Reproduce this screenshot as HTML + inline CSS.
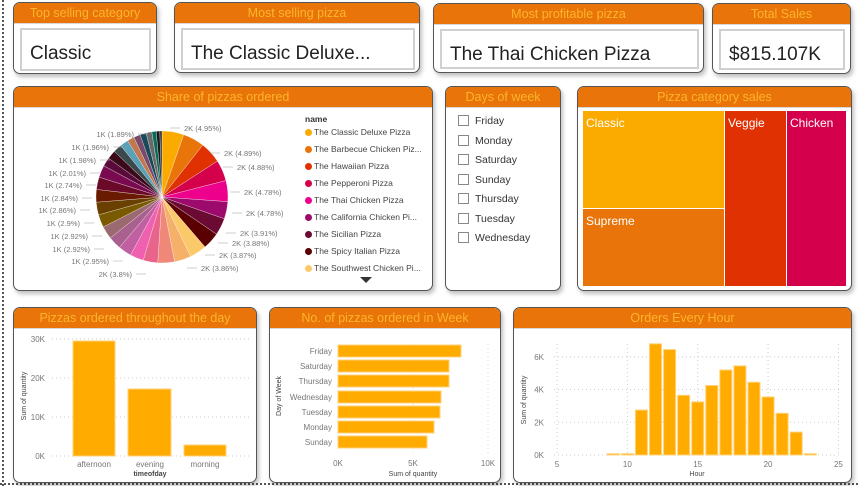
<!DOCTYPE html>
<html><head><meta charset="utf-8"><style>
*{box-sizing:border-box;margin:0;padding:0}
body{width:858px;height:486px;background:#fff;position:relative;overflow:hidden;font-family:"Liberation Sans",sans-serif}
.card{position:absolute;background:#fff;border:1px solid #555;border-radius:7px;overflow:hidden;box-shadow:2px 3px 4px rgba(0,0,0,.25)}
.hd{background:#e8740a;color:#fdb52a;text-align:center;font-size:12.5px;height:21px;line-height:21px;border-bottom:1px solid #d8d8d8}
.box{position:absolute;border:2px solid #d0d0d0;background:#fff;font-size:19px;color:#222;padding-left:8px}
.abs{position:absolute}
.ax{position:absolute;font-size:8px;color:#777}
.lg{position:absolute;font-size:8.5px;color:#444;white-space:nowrap}
.lg i{display:inline-block;width:7px;height:7px;border-radius:50%;margin-right:2px;vertical-align:-0.5px}
.day{position:absolute;left:12px;font-size:10.5px;color:#333}
.day i{display:inline-block;width:11px;height:11px;border:1px solid #888;margin-right:6px;vertical-align:-2px}
</style></head><body>
<div class="abs" style="left:2px;top:0;bottom:0;border-left:2px dotted #555"></div>
<div class="abs" style="left:0;right:0;top:483px;border-top:2px dotted #555"></div>

<div class="card" style="left:13px;top:2px;width:144px;height:72px"><div class="hd">Top selling category</div>
<div class="box" style="left:6px;top:25px;width:131px;height:43px;line-height:48px">Classic</div></div>
<div class="card" style="left:174px;top:2px;width:246px;height:71px"><div class="hd">Most selling pizza</div>
<div class="box" style="left:6px;top:25px;width:234px;height:42px;line-height:47px">The Classic Deluxe...</div></div>
<div class="card" style="left:433px;top:3px;width:271px;height:70px"><div class="hd">Most profitable pizza</div>
<div class="box" style="left:6px;top:25px;width:259px;height:40px;line-height:47px">The Thai Chicken Pizza</div></div>
<div class="card" style="left:712px;top:3px;width:139px;height:71px"><div class="hd">Total Sales</div>
<div class="box" style="left:6px;top:25px;width:126px;height:41px;line-height:48px">$815.107K</div></div>

<div class="card" style="left:13px;top:86px;width:420px;height:205px"><div class="hd">Share of pizzas ordered</div>
<svg id="pie" class="abs" style="left:0;top:0" width="420" height="205"></svg>
<div class="lg" style="left:291px;top:27px;font-weight:bold;color:#333">name</div>
<div id="leg"></div>
<div class="abs" style="left:346px;top:190px;width:0;height:0;border-left:6px solid transparent;border-right:6px solid transparent;border-top:6px solid #333"></div>
</div>

<div class="card" style="left:445px;top:86px;width:116px;height:205px"><div class="hd">Days of week</div>
<div class="day" style="top:28px"><i></i>Friday</div>
<div class="day" style="top:48px"><i></i>Monday</div>
<div class="day" style="top:67px"><i></i>Saturday</div>
<div class="day" style="top:87px"><i></i>Sunday</div>
<div class="day" style="top:106px"><i></i>Thursday</div>
<div class="day" style="top:126px"><i></i>Tuesday</div>
<div class="day" style="top:145px"><i></i>Wednesday</div>
</div>

<div class="card" style="left:577px;top:86px;width:275px;height:205px"><div class="hd">Pizza category sales</div>
<div class="abs" style="left:5px;top:24px;width:141px;height:97px;background:#fbab00;color:#fff;font-size:12px;padding:5px 3px">Classic</div>
<div class="abs" style="left:5px;top:122px;width:141px;height:77px;background:#e8740a;color:#fff;font-size:12px;padding:5px 3px">Supreme</div>
<div class="abs" style="left:147px;top:24px;width:61px;height:175px;background:#e03102;color:#fff;font-size:12px;padding:5px 3px">Veggie</div>
<div class="abs" style="left:209px;top:24px;width:59px;height:175px;background:#d5004c;color:#fff;font-size:12px;padding:5px 3px">Chicken</div>
</div>

<div class="card" style="left:13px;top:307px;width:244px;height:176px"><div class="hd">Pizzas ordered throughout the day</div>
<svg class="abs" style="left:0;top:0" width="244" height="176">
<g stroke="#ccc" stroke-dasharray="1,3"><line x1="38" x2="235" y1="31" y2="31"/><line x1="38" x2="235" y1="70" y2="70"/><line x1="38" x2="235" y1="109" y2="109"/><line x1="38" x2="235" y1="148" y2="148"/></g>
<g fill="#ffab00" stroke="#ffd27a" stroke-width="1"><rect x="59" y="33" width="42" height="115"/><rect x="114" y="81" width="43" height="67"/><rect x="170" y="137" width="42" height="11"/></g>
<g font-size="8" fill="#777" text-anchor="end"><text x="31" y="34">30K</text><text x="31" y="73">20K</text><text x="31" y="112">10K</text><text x="31" y="151">0K</text></g>
<g font-size="8" fill="#777" text-anchor="middle"><text x="80" y="159">afternoon</text><text x="136" y="159">evening</text><text x="191" y="159">morning</text></g>
<text x="136" y="168" font-size="7" fill="#444" font-weight="bold" text-anchor="middle">timeofday</text>
<text transform="translate(12,88) rotate(-90)" font-size="7" fill="#444" text-anchor="middle">Sum of quantity</text>
</svg></div>

<div class="card" style="left:269px;top:307px;width:232px;height:176px"><div class="hd">No. of pizzas ordered in Week</div>
<svg class="abs" style="left:0;top:0" width="232" height="176">
<g stroke="#ddd" stroke-dasharray="1,3"><line x1="143" x2="143" y1="36" y2="148"/><line x1="218" x2="218" y1="36" y2="148"/></g>
<g fill="#ffab00" stroke="#ffd27a"><rect x="68" y="37" width="123" height="12"/><rect x="68" y="52" width="111" height="12"/><rect x="68" y="67" width="111" height="12"/><rect x="68" y="83" width="103" height="12"/><rect x="68" y="98" width="102" height="12"/><rect x="68" y="113" width="96" height="12"/><rect x="68" y="128" width="89" height="12"/></g>
<g font-size="8" fill="#777" text-anchor="end"><text x="62" y="46">Friday</text><text x="62" y="61">Saturday</text><text x="62" y="76">Thursday</text><text x="62" y="92">Wednesday</text><text x="62" y="107">Tuesday</text><text x="62" y="122">Monday</text><text x="62" y="137">Sunday</text></g>
<g font-size="8" fill="#777" text-anchor="middle"><text x="68" y="158">0K</text><text x="143" y="158">5K</text><text x="218" y="158">10K</text></g>
<text x="143" y="168" font-size="7" fill="#444" text-anchor="middle">Sum of quantity</text>
<text transform="translate(11,88) rotate(-90)" font-size="7" fill="#444" text-anchor="middle">Day of Week</text>
</svg></div>

<div class="card" style="left:513px;top:307px;width:339px;height:176px"><div class="hd">Orders Every Hour</div>
<svg id="hr" class="abs" style="left:0;top:0" width="339" height="176"></svg></div>

<script>
// pie
var vals=[4.95,4.89,4.88,4.78,4.78,3.91,3.88,3.87,3.86,3.8,3.8,3.3,3.1,3.0,2.95,2.92,2.92,2.9,2.86,2.84,2.74,2.01,1.98,1.96,1.89,1.6,1.5,1.4,1.3,1.0,0.8,0.5];
var cols=["#fbab00","#e8740a","#e03102","#d5004c","#ec008c","#9c0a6b","#6b0a32","#5a0000","#fcc96a","#f5b06a","#f0887a","#e8648a","#f060b0","#c060a0","#a8608e","#9a6a70","#7a5a00","#6a4000","#6a1a00","#6a0a28","#7a0a50","#5a0a3a","#3a0a1a","#3a4a4a","#5aa0b8","#c07850","#7a4a6a","#1a4a5a","#6a6a6a","#0a6a5a","#1a1a1a","#333"];
var tot=vals.reduce((a,b)=>a+b,0),cx=148,cy=110,r=66,a=0,s="";
for(var i=0;i<vals.length;i++){var a2=a+vals[i]/tot*2*Math.PI;
var x1=cx+r*Math.sin(a),y1=cy-r*Math.cos(a),x2=cx+r*Math.sin(a2),y2=cy-r*Math.cos(a2);
s+='<path d="M'+cx+','+cy+'L'+x1.toFixed(1)+','+y1.toFixed(1)+'A'+r+','+r+' 0 0 1 '+x2.toFixed(1)+','+y2.toFixed(1)+'Z" fill="'+cols[i]+'" stroke="#fff" stroke-width="0.3"/>';a=a2;}
var L=[["2K (4.95%)",170,41,0],["2K (4.89%)",210,66,0],["2K (4.88%)",223,80,0],["2K (4.78%)",230,105,0],["2K (4.78%)",232,126,0],["2K (3.91%)",226,146,0],["2K (3.88%)",218,156,0],["2K (3.87%)",205,168,0],["2K (3.86%)",187,181,0],["2K (3.8%)",118,187,1],["1K (2.95%)",95,174,1],["1K (2.92%)",76,162,1],["1K (2.92%)",74,149,1],["1K (2.9%)",66,136,1],["1K (2.86%)",62,123,1],["1K (2.84%)",64,111,1],["1K (2.74%)",68,98,1],["1K (2.01%)",72,86,1],["1K (1.98%)",82,73,1],["1K (1.96%)",95,60,1],["1K (1.89%)",120,47,1]];
L.forEach(function(l){var ex=l[3]?l[1]+4:l[1]-4;s+='<text x="'+l[1]+'" y="'+(l[2]+3)+'" font-size="7.5" fill="#777" text-anchor="'+(l[3]?'end':'start')+'">'+l[0]+'</text><line x1="'+ex+'" x2="'+(l[3]?ex+10:ex-10)+'" y1="'+l[2]+'" y2="'+l[2]+'" stroke="#aaa" stroke-width="0.6"/>';});
document.getElementById('pie').innerHTML=s;
var names=["The Classic Deluxe Pizza","The Barbecue Chicken Piz...","The Hawaiian Pizza","The Pepperoni Pizza","The Thai Chicken Pizza","The California Chicken Pi...","The Sicilian Pizza","The Spicy Italian Pizza","The Southwest Chicken Pi..."];
var lc=["#fbab00","#e8740a","#e03102","#d5004c","#ec008c","#9c0a6b","#6b0a32","#5a0000","#fcc96a"],h="";
names.forEach(function(n,i){h+='<div class="lg" style="left:291px;top:'+(40+i*17)+'px"><i style="background:'+lc[i]+'"></i>'+n+'</div>';});
document.getElementById('leg').innerHTML=h;
// hour
var hv={9:.08,10:.08,11:2.75,12:6.8,13:6.45,14:3.65,15:3.25,16:4.25,17:5.2,18:5.45,19:4.45,20:3.55,21:2.55,22:1.4,23:.08};
var X=function(v){return 43+(v-5)*14.07},Y=function(v){return 147-v*16.35},g='<g stroke="#ccc" stroke-dasharray="1,3">';
[0,2,4,6].forEach(function(v){g+='<line x1="40" x2="325" y1="'+Y(v)+'" y2="'+Y(v)+'"/>';});
[5,10,15,20,25].forEach(function(v){g+='<line x1="'+X(v)+'" x2="'+X(v)+'" y1="36" y2="147"/>';});
g+='</g><g fill="#ffab00" stroke="#ffd27a">';
for(var k in hv){g+='<rect x="'+(X(+k)-6)+'" y="'+Y(hv[k])+'" width="12" height="'+(hv[k]*16.35)+'"/>';}
g+='</g><g font-size="8" fill="#777" text-anchor="end">';
[0,2,4,6].forEach(function(v){g+='<text x="30" y="'+(Y(v)+3)+'">'+v+'K</text>';});
g+='</g><g font-size="8" fill="#777" text-anchor="middle">';
[5,10,15,20,25].forEach(function(v){g+='<text x="'+X(v)+'" y="159">'+v+'</text>';});
g+='</g><text x="183" y="168" font-size="7" fill="#444" text-anchor="middle">Hour</text><text transform="translate(12,92) rotate(-90)" font-size="7" fill="#444" text-anchor="middle">Sum of quantity</text>';
document.getElementById('hr').innerHTML=g;
</script>
</body></html>
